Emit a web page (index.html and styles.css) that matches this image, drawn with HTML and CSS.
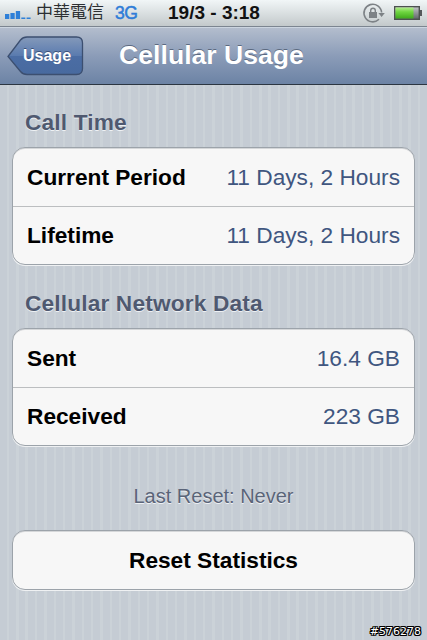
FILE: index.html
```html
<!DOCTYPE html>
<html lang="en">
<head>
    <meta charset="UTF-8">
    <meta name="viewport" content="width=device-width, initial-scale=1.0">
    <title>Cellular Usage</title>
    <link rel="stylesheet" href="styles.css">
</head>
<body>
    <div class="status-bar">
        <div class="carrier">
            <svg class="signal" width="26" height="10" viewBox="0 0 26 10">
                <rect x="0" y="4" width="4.300" height="5"/>
                <rect x="5.400" y="3" width="4.300" height="6"/>
                <rect x="10.800" y="1" width="4.300" height="8"/>
                <rect x="16.300" y="7.500" width="4" height="1.500"/>
                <rect x="21.600" y="7.500" width="4" height="1.500"/>
            </svg>
            <span class="carrier-name">中華電信</span>
            <span class="network">3G</span>
        </div>
        <div class="clock">19/3 - 3:18</div>
        <div class="indicators">
            <svg width="24" height="22" viewBox="0 0 24 22">
                <path d="M17 17.300A8.800 8.800 0 1 1 19.600 10.500" fill="none" stroke="#7d8286" stroke-width="1.600"/>
                <path d="M16.400 11h6.400l-3.200 4z" fill="#7d8286"/>
                <rect x="7" y="10" width="8" height="6" fill="#7d8286"/>
                <path d="M8.700 10.500V8.600a2.300 2.300 0 0 1 4.600 0v1.900" fill="none" stroke="#7d8286" stroke-width="1.400"/>
            </svg>
            <svg class="battery" width="29" height="14" viewBox="0 0 29 14">
                <defs>
                    <linearGradient id="charge" x1="0" y1="0" x2="0" y2="1">
                        <stop offset="0" stop-color="#b2ec8c"/>
                        <stop offset="0.4" stop-color="#6fd640"/>
                        <stop offset="1" stop-color="#3fa91c"/>
                    </linearGradient>
                    <linearGradient id="empty" x1="0" y1="0" x2="0" y2="1">
                        <stop offset="0" stop-color="#c3c6c8"/>
                        <stop offset="1" stop-color="#5f6366"/>
                    </linearGradient>
                </defs>
                <rect x="0.7" y="0.7" width="24.6" height="12.6" fill="url(#empty)" stroke="#4c5150" stroke-width="1.4"/>
                <rect x="1.5" y="1.5" width="18" height="11" fill="url(#charge)"/>
                <rect x="26" y="4" width="2" height="6" fill="#55595b"/>
            </svg>
        </div>
    </div>

    <header>
        <a class="back" href="#usage">
            <svg width="77" height="40" viewBox="0 0 77 40">
                <defs>
                    <linearGradient id="back-fill" x1="0" y1="0" x2="0" y2="1">
                        <stop offset="0" stop-color="#8499ba"/>
                        <stop offset="0.5" stop-color="#5a7baf"/>
                        <stop offset="0.52" stop-color="#4b6da4"/>
                        <stop offset="1" stop-color="#486a9f"/>
                    </linearGradient>
                </defs>
                <path d="M1 20.5L13.5 4Q16 1 20 1H69.5Q75.5 1 75.5 7V32.5Q75.5 38.5 69.5 38.5H20Q16 38.5 13.5 35.500L1 20.5Z" fill="url(#back-fill)" stroke="#3c4f70" stroke-width="1.3"/>
            </svg>
            <span>Usage</span>
        </a>
        <h1>Cellular Usage</h1>
    </header>

    <main>
        <section>
            <h2>Call Time</h2>
            <ul class="group">
                <li><span class="label">Current Period</span><span class="value">11 Days, 2 Hours</span></li>
                <li><span class="label">Lifetime</span><span class="value">11 Days, 2 Hours</span></li>
            </ul>
        </section>

        <section>
            <h2>Cellular Network Data</h2>
            <ul class="group">
                <li><span class="label">Sent</span><span class="value">16.4 GB</span></li>
                <li><span class="label">Received</span><span class="value">223 GB</span></li>
            </ul>
        </section>

        <p class="last-reset">Last Reset: Never</p>
        <button class="group reset">Reset Statistics</button>
    </main>

    <div class="tag">#576278</div>
</body>
</html>
```

FILE: styles.css
```css
* {
    box-sizing: border-box;
}

body {
    font-family: "Liberation Sans", Arial, "Noto Sans CJK TC", sans-serif;
    margin: 0;
    height: 640px;
    overflow: hidden;
    position: relative;
    background: repeating-linear-gradient(to right, #c5ccd4 0, #c5ccd4 6.8px, #cbd2d8 6.8px, #cbd2d8 9.34px);
}

.status-bar {
    height: 27px;
    display: grid;
    grid-template-columns: 1fr auto 1fr;
    align-items: center;
    padding: 0 4px 0 5px;
    background: linear-gradient(#f1f6f7, #c3c9cb);
    border-bottom: 1px solid #7c8590;
}

.carrier {
    display: flex;
    align-items: center;
}

.signal {
    fill: #2f80d8;
    margin-top: 3px;
}

.carrier-name {
    font-size: 17px;
    line-height: 26px;
    margin-left: 5px;
    color: #2c2f32;
}

.network {
    font-size: 17.5px;
    letter-spacing: -0.5px;
    margin-left: 11px;
    color: #2f7dd8;
    -webkit-text-stroke: 0.5px #2f7dd8;
}

.clock {
    font-size: 19px;
    font-weight: bold;
    color: #111;
}

.indicators {
    display: flex;
    justify-content: flex-end;
    align-items: center;
    gap: 8px;
}

header {
    height: 58px;
    position: relative;
    background: linear-gradient(#b3bdcd, #8b9cb8 50%, #6c83a5);
    border-top: 1px solid #ccd5e0;
    border-bottom: 1px solid #2c3642;
}

h1 {
    margin: 0;
    padding-right: 4px;
    font-size: 26.6px;
    line-height: 54px;
    text-align: center;
    color: white;
    text-shadow: 0 -1px 0 #5c6a80;
}

.back {
    position: absolute;
    left: 7px;
    top: 8px;
    color: white;
    text-decoration: none;
}

.back svg {
    display: block;
}

.back span {
    position: absolute;
    left: 16px;
    top: 0;
    font-size: 16px;
    font-weight: bold;
    line-height: 39px;
    text-shadow: 0 -1px 0 #3b5178;
}

main {
    padding: 22px 12px 0;
}

section {
    margin-bottom: 23px;
}

h2 {
    margin: 0 0 10px 13px;
    font-size: 22.7px;
    letter-spacing: 0.15px;
    line-height: 30px;
    color: #4f5970;
    text-shadow: 0 1px 0 #eef1f4;
}

.group {
    margin: 0;
    padding: 0;
    list-style: none;
    background: #f7f7f7;
    border: 1px solid #9ca3aa;
    border-radius: 13px;
    box-shadow: 0 1px 0 #eff1f3, inset 0 1px 0 #d5d7d9;
}

.group li {
    height: 58px;
    display: flex;
    justify-content: space-between;
    align-items: center;
    padding: 0 14px;
    font-size: 22.7px;
}

.group li + li {
    border-top: 1px solid #bcbec0;
}

.label {
    font-weight: bold;
    color: #000;
}

.value {
    color: #405680;
}

.last-reset {
    margin: 38px 0 0;
    text-align: center;
    font-size: 20px;
    line-height: 24px;
    color: #5a6478;
    text-shadow: 0 1px 0 #eef1f4;
}

.reset {
    display: block;
    width: 100%;
    height: 60px;
    margin-top: 22px;
    font-family: inherit;
    font-size: 22.7px;
    font-weight: bold;
    color: #000;
}

.tag {
    position: absolute;
    right: 6px;
    bottom: 1px;
    font-family: "DejaVu Sans", sans-serif;
    font-size: 11px;
    line-height: 14px;
    color: white;
    text-shadow: -1px 0 #000, 1px 0 #000, 0 -1px #000, 0 1px #000, 1px 1px #000, -1px -1px #000, 1px -1px #000, -1px 1px #000;
}
```
